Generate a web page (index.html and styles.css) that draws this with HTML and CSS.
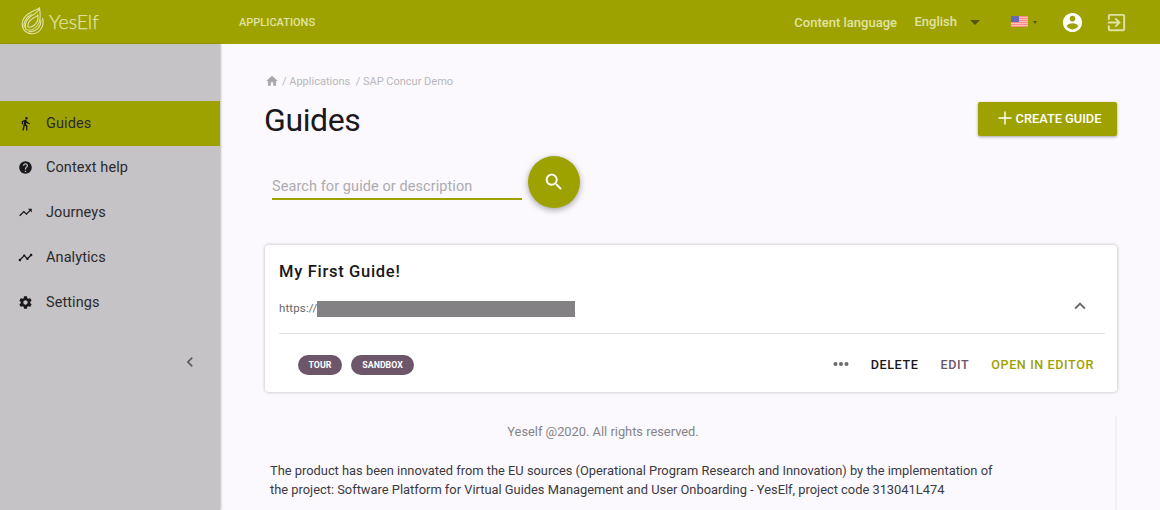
FILE: index.html
```html
<!DOCTYPE html>
<html lang="en">
<head>
    <meta charset="UTF-8">
    <meta name="viewport" content="width=device-width, initial-scale=1.0">
    <title>YesElf - Guides</title>
    <link rel="stylesheet" href="styles.css">
</head>
<body>
    <!-- Top bar -->
    <header class="topbar">
        <a class="logo" href="#">
            <svg class="logo-mark" viewBox="0 0 24 28">
                <path d="M18.500 1.200C12 4 1.200 8 1.200 17C1.200 23 5.500 26.800 11 26.800C18 26.800 24 20 21.500 11"/>
                <path d="M18.500 1.200C19.500 7 20.500 14 16 19C12.500 23 8 23.500 5 22.500C3.500 18 4.500 14 8.500 10.500C12 7.500 16.500 6 18.500 1.200Z"/>
                <path d="M16.800 8C17.500 12 16.500 15.500 13.500 18C11.500 20 9 20.500 7 20.200C6.500 17 8 14 11 12C13 10.500 15.500 10 16.800 8Z"/>
                <path d="M3.300 20.500C1.800 14 6 10 10.500 7.200"/>
                <path d="M19.800 13C20.500 19 15.500 25.500 7.500 24.500"/>
            </svg>
            <span class="logo-text">YesElf</span>
        </a>
        <a class="topbar-link" href="#">APPLICATIONS</a>
        <div class="topbar-right">
            <span class="lang-label">Content language</span>
            <span class="lang-value">English</span>
            <span class="caret"></span>
            <svg class="flag" viewBox="0 0 17 11">
                <rect width="17" height="11" fill="#fdc0b8"/>
                <path d="M0 .5h17M0 2.500h17M0 4.500h17M0 6.500h17M0 8.500h17M0 10.500h17" stroke="#fa8b88" stroke-width="1"/>
                <rect width="8" height="6" fill="#6668b4"/>
            </svg>
            <span class="caret caret-small"></span>
            <svg class="account" viewBox="0 0 24 24"><path d="M12 2C6.480 2 2 6.480 2 12s4.480 10 10 10 10-4.480 10-10S17.520 2 12 2zm0 3c1.660 0 3 1.340 3 3s-1.340 3-3 3-3-1.340-3-3 1.340-3 3-3zm0 14.200c-2.500 0-4.710-1.280-6-3.220.030-1.990 4-3.080 6-3.080 1.990 0 5.970 1.090 6 3.080-1.290 1.940-3.500 3.220-6 3.220z"/></svg>
            <svg class="logout" viewBox="0 0 24 24"><path d="M10.090 15.590L11.500 17l5-5-5-5-1.410 1.410L12.670 11H3v2h9.670l-2.580 2.590zM19 3H5c-1.110 0-2 .9-2 2v4h2V5h14v14H5v-4H3v4c0 1.100.890 2 2 2h14c1.100 0 2-.9 2-2V5c0-1.100-.9-2-2-2z"/></svg>
        </div>
    </header>

    <div class="layout">
        <!-- Sidebar -->
        <aside class="sidebar">
            <nav class="menu">
                <a class="menu-item active" href="#">
                    <svg class="menu-icon" viewBox="0 0 24 24"><path d="M13.500 5.500c1.100 0 2-.9 2-2s-.9-2-2-2-2 .9-2 2 .9 2 2 2zM9.800 8.900L7 23h2.100l1.800-8 2.100 2v6h2v-7.500l-2.100-2 .6-3C14.800 12 16.800 13 19 13v-2c-1.900 0-3.500-1-4.300-2.400l-1-1.600c-.4-.6-1-1-1.700-1-.3 0-.5.100-.8.100L6 8.300V13h2V9.600l1.800-.7"/></svg>
                    <span>Guides</span>
                </a>
                <a class="menu-item" href="#">
                    <svg class="menu-icon" viewBox="0 0 24 24"><path d="M12 2C6.480 2 2 6.480 2 12s4.480 10 10 10 10-4.480 10-10S17.520 2 12 2zm1 17h-2v-2h2v2zm2.070-7.750l-.9.920C13.450 12.900 13 13.500 13 15h-2v-.5c0-1.100.450-2.100 1.170-2.830l1.240-1.260c.370-.360.590-.860.590-1.410 0-1.100-.9-2-2-2s-2 .9-2 2H8c0-2.210 1.790-4 4-4s4 1.790 4 4c0 .880-.360 1.680-.930 2.250z"/></svg>
                    <span>Context help</span>
                </a>
                <a class="menu-item" href="#">
                    <svg class="menu-icon" viewBox="0 0 24 24"><path d="M16 6l2.290 2.290-4.880 4.880-4-4L2 16.590 3.410 18l6-6 4 4 6.300-6.290L22 12V6z"/></svg>
                    <span>Journeys</span>
                </a>
                <a class="menu-item" href="#">
                    <svg class="menu-icon" viewBox="0 0 24 24"><path d="M23 8c0 1.100-.9 2-2 2-.180 0-.350-.020-.510-.070l-3.560 3.550c.050.160.070.340.070.520 0 1.100-.9 2-2 2s-2-.9-2-2c0-.180.020-.360.070-.520l-2.550-2.550c-.160.050-.340.070-.520.070s-.360-.020-.520-.070l-4.550 4.560c.050.160.070.330.070.510 0 1.100-.9 2-2 2s-2-.9-2-2 .9-2 2-2c.180 0 .350.020.510.070l4.560-4.550C8.020 9.360 8 9.180 8 9c0-1.100.9-2 2-2s2 .9 2 2c0 .180-.020.360-.070.520l2.550 2.550c.160-.050.340-.070.520-.070s.360.020.520.070l3.550-3.560C19.020 8.350 19 8.180 19 8c0-1.100.9-2 2-2s2 .9 2 2z"/></svg>
                    <span>Analytics</span>
                </a>
                <a class="menu-item" href="#">
                    <svg class="menu-icon" viewBox="0 0 24 24"><path d="M19.430 12.980c.040-.320.070-.640.070-.980s-.030-.660-.070-.980l2.110-1.650c.190-.150.240-.420.120-.640l-2-3.460c-.120-.220-.390-.3-.610-.220l-2.490 1c-.520-.4-1.080-.730-1.690-.980l-.380-2.650C14.460 2.180 14.250 2 14 2h-4c-.250 0-.460.180-.490.420l-.380 2.650c-.610.250-1.170.590-1.690.980l-2.490-1c-.230-.090-.490 0-.610.220l-2 3.460c-.130.220-.070.490.120.640l2.110 1.650c-.040.320-.070.650-.070.980s.030.660.070.980l-2.110 1.650c-.190.150-.240.420-.120.640l2 3.460c.120.220.390.3.610.220l2.490-1c.520.4 1.080.730 1.690.980l.380 2.650c.030.240.240.420.490.420h4c.250 0 .460-.180.490-.420l.380-2.650c.610-.250 1.170-.590 1.690-.980l2.490 1c.230.090.490 0 .610-.220l2-3.460c.120-.220.070-.490-.120-.640l-2.110-1.650zM12 15.500c-1.930 0-3.500-1.570-3.500-3.500s1.570-3.500 3.500-3.500 3.500 1.570 3.500 3.500-1.570 3.500-3.500 3.500z"/></svg>
                    <span>Settings</span>
                </a>
            </nav>
            <svg class="collapse" viewBox="0 0 24 24"><path d="M15.410 7.410L14 6l-6 6 6 6 1.410-1.410L10.830 12z"/></svg>
        </aside>

        <!-- Content -->
        <main class="content">
            <div class="breadcrumb">
                <svg class="home" viewBox="0 0 24 24"><path d="M10 20v-6h4v6h5v-8h3L12 3 2 12h3v8z"/></svg>
                <span>/ Applications</span>
                <span class="crumb-last">/ SAP Concur Demo</span>
            </div>

            <div class="page-head">
                <h1 class="page-title">Guides</h1>
                <button class="create-btn" type="button">
                    <svg class="plus" viewBox="0 0 14 14"><path d="M7 .5v13M.5 7h13"/></svg>
                    CREATE GUIDE
                </button>
            </div>

            <div class="search">
                <input class="search-input" type="text" placeholder="Search for guide or description">
                <button class="search-btn" type="button" aria-label="Search">
                    <svg class="search-icon" viewBox="0 0 24 24"><path d="M15.500 14h-.790l-.280-.270C15.410 12.590 16 11.110 16 9.500 16 5.910 13.090 3 9.500 3S3 5.910 3 9.500 5.910 16 9.500 16c1.610 0 3.090-.590 4.230-1.570l.270.280v.790l5 4.990L20.490 19l-4.990-5zm-6 0C7.010 14 5 11.990 5 9.500S7.010 5 9.500 5 14 7.010 14 9.500 11.990 14 9.500 14z"/></svg>
                </button>
            </div>

            <!-- Guide card -->
            <section class="card">
                <h2 class="card-title">My First Guide!</h2>
                <div class="card-url">
                    <span>https://</span>
                    <span class="redacted"></span>
                    <svg class="expand" viewBox="0 0 24 24"><path d="M12 8l-6 6 1.410 1.410L12 10.830l4.590 4.580L18 14z"/></svg>
                </div>
                <div class="card-footer">
                    <span class="tag">TOUR</span>
                    <span class="tag">SANDBOX</span>
                    <div class="actions">
                        <svg class="more" viewBox="0 0 16 6"><circle cx="2.500" cy="3" r="2"/><circle cx="8" cy="3" r="2"/><circle cx="13.500" cy="3" r="2"/></svg>
                        <a class="action" href="#">DELETE</a>
                        <a class="action edit" href="#">EDIT</a>
                        <a class="action open" href="#">OPEN IN EDITOR</a>
                    </div>
                </div>
            </section>

            <footer class="footer">
                <p class="copyright">Yeself @2020. All rights reserved.</p>
                <p class="project">The product has been innovated from the EU sources (Operational Program Research and Innovation) by the implementation of<br>the project: Software Platform for Virtual Guides Management and User Onboarding - YesElf, project code 313041L474</p>
            </footer>
        </main>
    </div>
</body>
</html>
```
FILE: styles.css
```css
* {
    box-sizing: border-box;
}
body {
    margin: 0;
    height: 510px;
    overflow: hidden;
    font-family: Roboto, "Liberation Sans", sans-serif;
    background: #fbf9fd;
    color: #19181b;
}
a {
    color: inherit;
    text-decoration: none;
}
svg {
    display: block;
    flex: none;
    fill: currentColor;
}

/* Top bar */
.topbar {
    display: flex;
    align-items: center;
    height: 44px;
    background: #9ea200;
    color: #e0e2a4;
    font-weight: 500;
}
.logo {
    display: flex;
    align-items: center;
    width: 239px;
    padding-left: 21px;
}
.logo-mark {
    width: 24px;
    height: 28px;
    margin-top: -2px;
    fill: none;
    stroke: currentColor;
    stroke-width: 1.1;
}
.logo-text {
    margin: -1px 0 0 4px;
    font-family: Lato, sans-serif;
    font-size: 19.5px;
    font-weight: 300;
    -webkit-text-stroke: 0.25px currentColor;
}
.topbar-link {
    font-size: 11px;
}
.topbar-right {
    display: flex;
    align-items: center;
    margin-left: auto;
    padding-right: 32px;
}
.lang-label {
    font-size: 13px;
    margin-right: 17.5px;
}
.lang-value {
    font-size: 13px;
    margin: -2px 13px 0 0;
}
.caret {
    border: 5px solid transparent;
    border-top-color: #55570b;
    border-bottom: 0;
}
.caret-small {
    border-width: 3px 2.5px 0;
}
.flag {
    width: 17px;
    height: 11px;
    margin: -2px 5px 0 31px;
}
.account {
    width: 23px;
    height: 23px;
    margin: 0 21px 0 24px;
    color: #fff;
}
.logout {
    width: 23px;
    height: 23px;
}

/* Sidebar */
.layout {
    display: flex;
    height: 466px;
}
.sidebar {
    flex: none;
    width: 220px;
    padding-top: 57px;
    background: #c5c3c6;
    box-shadow: 1px 0 2px rgba(0, 0, 0, 0.25);
}
.menu-item {
    display: flex;
    align-items: center;
    height: 44.75px;
    padding: 0 0 0.4px 18px;
    font-size: 14.5px;
    letter-spacing: 0.08px;
    color: #2b2a2d;
}
.menu-item.active {
    background: #9ea200;
}
.menu-icon {
    width: 15px;
    height: 15px;
    margin-right: 13px;
    color: #19181b;
}
.collapse {
    width: 20px;
    height: 20px;
    margin: 27px 20px 0 auto;
    color: #5c5b5e;
}

/* Content */
.content {
    flex: 1;
    padding: 30px 43px 0 45px;
}
.breadcrumb {
    display: flex;
    align-items: center;
    height: 14px;
    font-size: 11px;
    color: #b9b7bb;
}
.home {
    width: 14px;
    height: 14px;
    margin-right: 3px;
    color: #aaa8ac;
}
.crumb-last {
    margin-left: 5.5px;
}
.page-head {
    display: flex;
    justify-content: space-between;
    align-items: center;
    margin-top: 13px;
    height: 36px;
}
.page-title {
    margin: 2px 0 0 -1px;
    font-size: 32px;
    font-weight: 400;
    letter-spacing: -0.4px;
}
.create-btn {
    display: flex;
    align-items: center;
    justify-content: center;
    width: 139px;
    height: 34px;
    margin-top: -1px;
    padding: 0 0 1px 4px;
    border: 0;
    border-radius: 2px;
    background: #9ea200;
    box-shadow: 0 1px 3px rgba(0, 0, 0, 0.35);
    color: #fff;
    font: 500 12.8px Roboto, sans-serif;
}
.plus {
    width: 14px;
    height: 14px;
    margin-right: 4px;
    stroke: currentColor;
    stroke-width: 1.4;
}

/* Search */
.search {
    display: flex;
    margin: 19px 0 0 7px;
}
.search-input {
    width: 249.5px;
    height: 27px;
    margin: 17px 6.5px 0 0;
    padding: 2px 0 0;
    border: 0;
    border-bottom: 2px solid #9ea200;
    background: none;
    font: 14.5px Roboto, sans-serif;
    letter-spacing: 0.08px;
}
.search-input::placeholder {
    color: #adabaf;
}
.search-btn {
    display: flex;
    align-items: center;
    justify-content: center;
    width: 52px;
    height: 52px;
    padding: 0;
    border: 0;
    border-radius: 50%;
    background: #9ea200;
    box-shadow: 0 2px 6px rgba(0, 0, 0, 0.35);
    color: #fff;
}
.search-icon {
    width: 22px;
    height: 22px;
}

/* Guide card */
.card {
    height: 147px;
    margin-top: 37px;
    padding: 15px 12px 0 14px;
    border-radius: 4px;
    background: #fff;
    box-shadow: 0 0 3px 1px rgba(0, 0, 0, 0.16);
}
.card-title {
    margin: 0;
    font-size: 16.5px;
    font-weight: 500;
    line-height: 24px;
    letter-spacing: 0.7px;
}
.card-url {
    display: flex;
    align-items: center;
    height: 50px;
    border-bottom: 1px solid #e3e1e5;
    font-size: 11.5px;
    letter-spacing: 0.13px;
    color: #69686b;
}
.card-url span:first-child {
    margin-top: -2px;
}
.redacted {
    width: 258px;
    height: 16px;
    background: #838184;
}
.expand {
    width: 22px;
    height: 22px;
    margin: -6px 14px 0 auto;
    color: #69686b;
}
.card-footer {
    display: flex;
    align-items: center;
    height: 61px;
    padding: 0 10px 0 18.5px;
}
.tag {
    padding: 0 11px;
    margin-right: 9px;
    border-radius: 10px;
    background: #6e566a;
    color: #fff;
    font-size: 8.8px;
    font-weight: 700;
    line-height: 20px;
}
.actions {
    display: flex;
    align-items: center;
    margin: -1px 1px 0 auto;
}
.more {
    width: 16px;
    height: 6px;
    color: #69686b;
}
.action {
    margin-left: 22px;
    font-size: 12.6px;
    font-weight: 500;
    letter-spacing: 0.6px;
}
.edit {
    color: #6e566a;
}
.open {
    color: #9ea200;
}

/* Footer */
.footer {
    height: 94px;
    margin-top: 24px;
    padding: 6px 5px 0 5px;
    border-right: 2px solid #f1eff3;
}
.copyright {
    margin: 0 174px 0 0;
    text-align: center;
    font-size: 12.85px;
    line-height: 19px;
    color: #858387;
}
.project {
    margin: 20px 0 0;
    font-size: 12.86px;
    line-height: 19px;
    white-space: nowrap;
    color: #3b3a3d;
}
```
